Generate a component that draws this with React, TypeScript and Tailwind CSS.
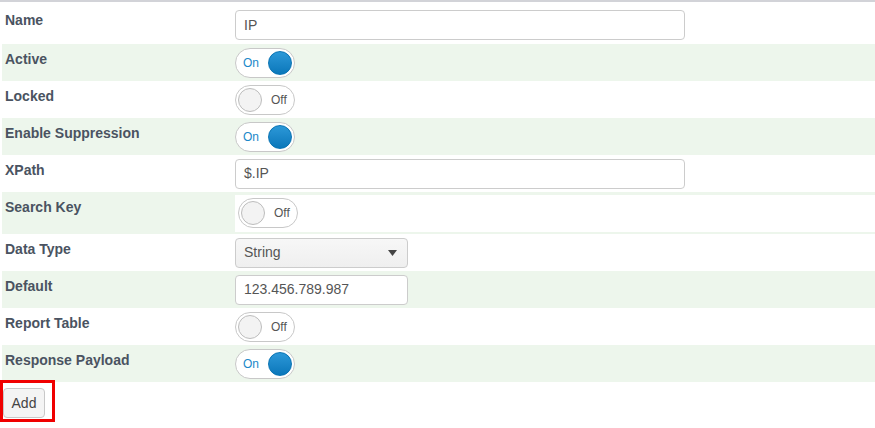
import React from "react";

const font = { fontFamily: '"Liberation Sans", Arial, sans-serif' };

function Toggle({ on }: { on: boolean }) {
  return (
    <div className="relative w-[60px] h-[30px] rounded-full border border-[#c8c8c8] bg-white flex items-center shrink-0">
      {on ? (
        <>
          <span className="absolute left-[7px] top-[6px] text-[12px] leading-[16px] text-[#1a88c9]">On</span>
          <span className="absolute right-[2px] top-[2px] w-[24px] h-[24px] rounded-full bg-gradient-to-b from-[#2b98d8] to-[#0877ba] border border-[#0a74b4]" />
        </>
      ) : (
        <>
          <span className="absolute left-[2px] top-[2px] w-[24px] h-[24px] rounded-full bg-[#f3f3f3] border border-[#bdbdbd]" />
          <span className="absolute left-[35px] top-[6px] text-[12px] leading-[16px] text-[#555]">Off</span>
        </>
      )}
    </div>
  );
}

function Row({
  label,
  green,
  h,
  labelPt = "pt-[5px]",
  children,
}: {
  label: string;
  green?: boolean;
  h: string;
  labelPt?: string;
  children: React.ReactNode;
}) {
  return (
    <div className={`flex ${h} ${green ? "bg-[#edf6ec]" : "bg-white"}`}>
      <div className={`w-[233px] shrink-0 pl-[3px] ${labelPt} text-[14px] leading-[20px] font-bold text-[#4a5361]`}>
        {label}
      </div>
      <div className="flex-1 flex items-center">{children}</div>
    </div>
  );
}

function TextInput({ value, w }: { value: string; w: string }) {
  return (
    <div className={`${w} h-[30px] border border-[#cccccc] rounded-[4px] bg-white flex items-center pl-[8px] text-[14px] text-[#555]`}>
      {value}
    </div>
  );
}

export default function App() {
  return (
    <div className="w-[875px] h-[428px] bg-white" style={font}>
      <div className="h-[2px] bg-[#d2d3d8]" />
      <div className="pl-[2px]">
        <Row label="Name" h="h-[42px]" labelPt="pt-[8px]">
          <div className="self-start pt-[8px]">
            <TextInput value="IP" w="w-[450px]" />
          </div>
        </Row>
        <Row label="Active" green h="h-[37px]">
          <Toggle on />
        </Row>
        <Row label="Locked" h="h-[37px]">
          <Toggle on={false} />
        </Row>
        <Row label="Enable Suppression" green h="h-[37px]">
          <Toggle on />
        </Row>
        <Row label="XPath" h="h-[37px]">
          <TextInput value="$.IP" w="w-[450px]" />
        </Row>
        <Row label="Search Key" green h="h-[42px]">
          <div className="w-full h-[37px] bg-white flex items-center pl-[3px]">
            <Toggle on={false} />
          </div>
        </Row>
        <Row label="Data Type" h="h-[37px]">
          <div className="w-[173px] h-[30px] border border-[#cccccc] rounded-[4px] bg-gradient-to-b from-[#f7f7f7] to-[#efefef] flex items-center justify-between pl-[8px] pr-[10px] text-[14px] text-[#555]">
            <span>String</span>
            <svg width="9" height="6" viewBox="0 0 9 6">
              <path d="M0 0 L9 0 L4.5 6 Z" fill="#444" />
            </svg>
          </div>
        </Row>
        <Row label="Default" green h="h-[37px]">
          <TextInput value="123.456.789.987" w="w-[173px]" />
        </Row>
        <Row label="Report Table" h="h-[37px]">
          <Toggle on={false} />
        </Row>
        <Row label="Response Payload" green h="h-[37px]">
          <Toggle on />
        </Row>
      </div>
      <div className="w-[55px] h-[42px] border-[3px] border-[#f00000] mt-[-2px] flex items-start">
        <button className="mt-[5px] ml-0 w-[42px] h-[30px] border border-[#c8c8c8] rounded-[4px] bg-[#f4f4f4] text-[14px] text-[#444]">
          Add
        </button>
      </div>
    </div>
  );
}
